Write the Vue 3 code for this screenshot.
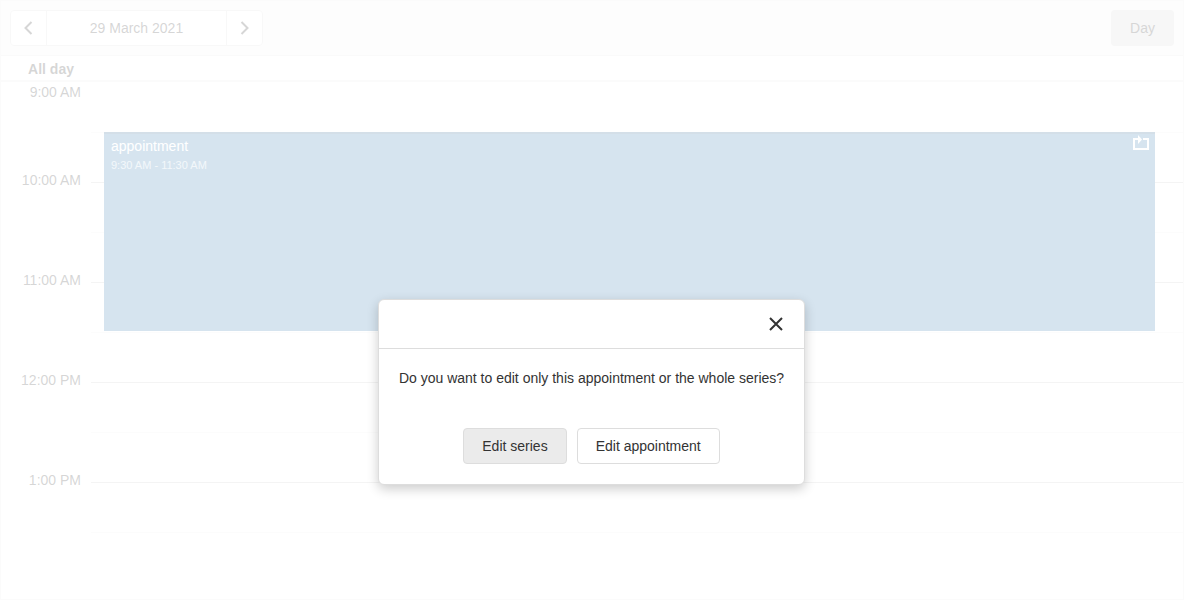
<script setup>
const hours = ['9:00 AM', '10:00 AM', '11:00 AM', '12:00 PM', '1:00 PM']
</script>

<template>
  <div class="page">
    <main class="scheduler">
      <header class="toolbar">
        <div class="navigator">
          <button type="button" class="arrow" aria-label="Previous day">
            <svg width="18" height="18" viewBox="0 0 18 18"><path d="M11.500 3 5.500 9l6 6" /></svg>
          </button>
          <button type="button" class="caption">29 March 2021</button>
          <button type="button" class="arrow" aria-label="Next day">
            <svg width="18" height="18" viewBox="0 0 18 18"><path d="m5.500 3 6 6-6 6" /></svg>
          </button>
        </div>
        <button type="button" class="view">Day</button>
      </header>
      <div class="all-day"><span class="all-day-title">All day</span></div>
      <div class="workspace">
        <div v-for="hour in hours" :key="hour" class="hour">
          <div class="time">{{ hour }}</div>
          <div class="cells">
            <div class="cell half"></div>
            <div class="cell"></div>
          </div>
        </div>
        <article class="appointment">
          <div class="title">appointment</div>
          <div class="date">9:30 AM - 11:30 AM</div>
          <svg class="recurrence" width="16" height="16" viewBox="0 0 16 16">
            <path class="loop" d="M6 4H1v10h14V4h-5" />
            <path class="tip" d="M5 0v9l4-4.500z" />
          </svg>
        </article>
      </div>
    </main>
    <div class="overlay">
      <section class="dialog" role="dialog" aria-modal="true" aria-describedby="question">
        <div class="dialog-header">
          <button type="button" class="close" aria-label="Close">
            <svg width="18" height="18" viewBox="0 0 18 18"><path d="m3 3 12 12M15 3 3 15" /></svg>
          </button>
        </div>
        <p id="question" class="question">Do you want to edit only this appointment or the whole series?</p>
        <div class="actions">
          <button type="button" class="action focused">Edit series</button>
          <button type="button" class="action">Edit appointment</button>
        </div>
      </section>
    </div>
  </div>
</template>

<style>
body {
  margin: 0;
}
</style>

<style scoped>
.page,
.page * {
  box-sizing: border-box;
}
.page {
  position: relative;
  display: flex;
  min-height: 100vh;
  color: #333;
  background: #fff;
  font: 14px/18px "Liberation Sans", Arial, sans-serif;
}
button {
  margin: 0;
  padding: 0;
  border: 0;
  background: none;
  color: inherit;
  font: inherit;
  cursor: pointer;
}
svg {
  display: block;
  fill: none;
  stroke: currentColor;
  stroke-width: 2;
}
.scheduler {
  flex: 1;
  border: 1px solid #ebebeb;
}
.toolbar {
  display: flex;
  justify-content: space-between;
  padding: 9px;
  border-bottom: 1px solid #e4e4e4;
  background: #f5f5f5;
}
.navigator {
  display: flex;
  height: 36px;
  border: 1px solid #ddd;
  border-radius: 4px;
  background: #fff;
}
.arrow {
  display: flex;
  align-items: center;
  justify-content: center;
  width: 35px;
}
.caption {
  width: 181px;
  border: solid #ddd;
  border-width: 0 1px;
}
.view {
  height: 36px;
  padding: 0 19px;
  border-radius: 4px;
  background: #d4d4d4;
}
.all-day {
  padding: 4px 0 2px;
  border-bottom: 2px solid #ebebeb;
}
.all-day-title {
  display: block;
  width: 100px;
  text-align: center;
  font-weight: bold;
}
.workspace {
  position: relative;
  padding-top: 1px;
}
.hour {
  display: flex;
}
.time {
  width: 90px;
  margin-top: -12px;
  padding-right: 10px;
  text-align: right;
}
.hour:first-child .time {
  margin-top: 0;
}
.cells {
  flex: 1;
}
.cell {
  height: 50px;
  border-bottom: 1px solid #c8c8c8;
}
.cell.half {
  border-bottom-color: #f0f0f0;
}
.hour:nth-child(5) .cell:last-child {
  border-bottom: 0;
}
.appointment {
  position: absolute;
  top: 50px;
  left: 103px;
  right: 28px;
  height: 199px;
  padding: 5px 7px;
  background: #337ab0;
  box-shadow: inset 0 2px 0 rgba(0, 0, 0, 0.2);
  color: #fff;
}
.date {
  margin-top: 2px;
  font-size: 11px;
  line-height: 16px;
  opacity: 0.7;
}
.recurrence {
  position: absolute;
  top: 3px;
  right: 6px;
}
.tip {
  fill: currentColor;
  stroke: none;
}
.overlay {
  position: absolute;
  inset: 0;
  display: flex;
  align-items: flex-start;
  justify-content: center;
  padding: 299px 1px 0 0;
  background: rgba(255, 255, 255, 0.8);
}
.dialog {
  border: 1px solid #ddd;
  border-radius: 6px;
  background: #fff;
  box-shadow: 0 4px 12px rgba(0, 0, 0, 0.2);
}
.dialog-header {
  display: flex;
  justify-content: flex-end;
  padding: 6px 10px;
  border-bottom: 1px solid #ddd;
}
.close {
  display: flex;
  align-items: center;
  justify-content: center;
  width: 36px;
  height: 36px;
}
.question {
  margin: 0;
  padding: 20px;
}
.actions {
  display: flex;
  justify-content: center;
  gap: 10px;
  padding: 21px 20px 20px;
}
.action {
  height: 36px;
  padding: 0 18px;
  border: 1px solid #ddd;
  border-radius: 4px;
}
.action.focused {
  background: #ebebeb;
}
</style>
